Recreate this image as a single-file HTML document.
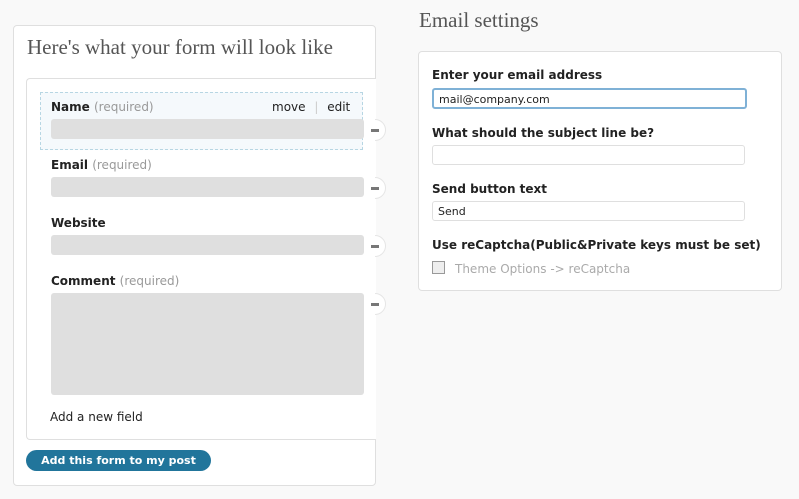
<!DOCTYPE html>
<html><head><style>
body{margin:0;width:799px;height:499px;background:#f9f9f9;position:relative;overflow:hidden;font-family:"DejaVu Sans","Liberation Sans",sans-serif;font-size:12px;color:#222}
.a{position:absolute}
.panel{background:#fff;border:1px solid #dfdfdf;border-radius:4px;box-sizing:border-box}
.h{font-family:"Liberation Serif","DejaVu Serif",serif;color:#555;font-size:21px}
.lbl{font-weight:bold;color:#222}
.req{font-weight:normal;color:#999}
.fld{background:#dfdfdf;border-radius:3px}
.minus{width:22px;height:22px;border-radius:50%;background:#fff;border:1px solid #e5e5e5;box-sizing:border-box;clip-path:inset(0 0 0 11px)}
.bar{width:8px;height:3px;background:#777}
.inp{background:#fff;border:1px solid #dfdfdf;border-radius:3px;box-sizing:border-box;font-size:11px;padding:3px 5px}
</style></head><body>
<div class="a panel" style="left:13px;top:25px;width:363px;height:461px"></div>
<div class="a h" style="left:27px;top:35px">Here's what your form will look like</div>
<div class="a panel" style="left:26px;top:78px;width:350px;height:362px;border-right:none;border-radius:4px 0 0 4px"></div>
<div class="a minus" style="left:364px;top:119px"></div>
<div class="a minus" style="left:364px;top:177px"></div>
<div class="a minus" style="left:364px;top:235px"></div>
<div class="a minus" style="left:364px;top:293px"></div>
<div class="a" style="left:40px;top:92px;width:321px;height:56px;background:#f5f9fc;border:1px dashed #b7d6e3"></div>
<div class="a lbl" style="left:51px;top:100px">Name <span class="req">(required)</span></div>
<div class="a" style="left:272px;top:100px">move <span style="color:#ccc;margin:0 5px">|</span> edit</div>
<div class="a fld" style="left:51px;top:119px;width:313px;height:20px"></div>
<div class="a lbl" style="left:51px;top:158px">Email <span class="req">(required)</span></div>
<div class="a fld" style="left:51px;top:177px;width:313px;height:20px"></div>
<div class="a lbl" style="left:51px;top:216px">Website</div>
<div class="a fld" style="left:51px;top:235px;width:313px;height:20px"></div>
<div class="a lbl" style="left:51px;top:274px">Comment <span class="req">(required)</span></div>
<div class="a fld" style="left:51px;top:293px;width:313px;height:102px"></div>
<div class="a bar" style="left:371px;top:129px"></div>
<div class="a bar" style="left:371px;top:187px"></div>
<div class="a bar" style="left:371px;top:245px"></div>
<div class="a bar" style="left:371px;top:303px"></div>
<div class="a" style="left:50px;top:410px;color:#222">Add a new field</div>
<div class="a" style="left:26px;top:450px;width:185px;height:21px;border-radius:11px;background:#21759b;color:#fff;font-weight:bold;font-size:11px;line-height:21px;text-align:center">Add this form to my post</div>

<div class="a h" style="left:419px;top:8px">Email settings</div>
<div class="a panel" style="left:418px;top:51px;width:364px;height:240px"></div>
<div class="a lbl" style="left:432px;top:68px">Enter your email address</div>
<div class="a inp" style="left:432px;top:88px;width:315px;height:21px;border:2px solid #7fb1d6">mail@company.com</div>
<div class="a lbl" style="left:432px;top:126px">What should the subject line be?</div>
<div class="a inp" style="left:432px;top:145px;width:313px;height:20px"></div>
<div class="a lbl" style="left:432px;top:182px">Send button text</div>
<div class="a inp" style="left:432px;top:201px;width:313px;height:20px;padding-top:3px">Send</div>
<div class="a lbl" style="left:432px;top:238px">Use reCaptcha(Public&amp;Private keys must be set)</div>
<div class="a" style="left:432px;top:261px;width:11px;height:11px;border:1px solid #999;background:#eee"></div>
<div class="a" style="left:455px;top:262px;color:#aaa">Theme Options -&gt; reCaptcha</div>
</body></html>
